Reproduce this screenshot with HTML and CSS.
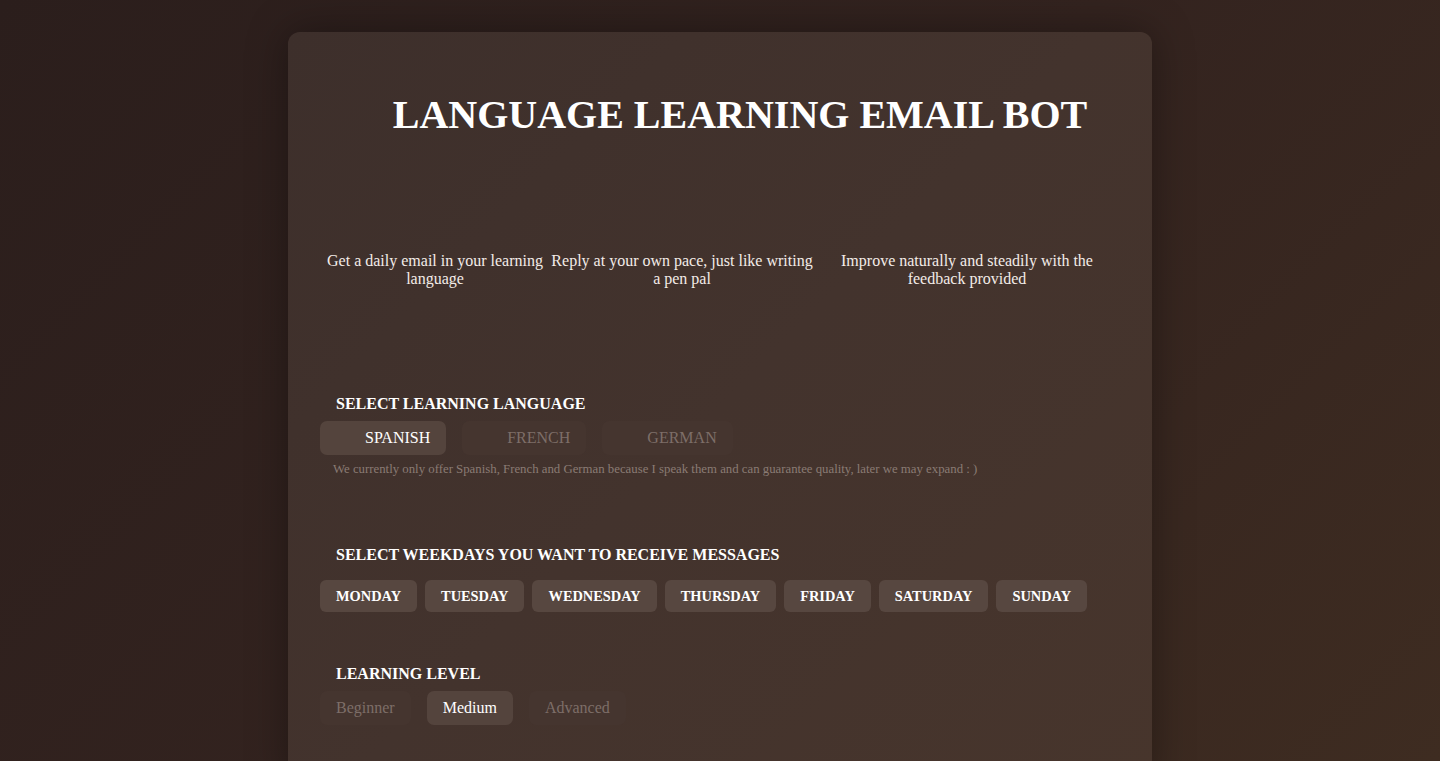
FILE: index.html
```html
<!DOCTYPE html>
<html lang="en">
<head>
<meta charset="utf-8">
<title>Language Learning Email Bot</title>
<link rel="stylesheet" href="styles.css">
</head>
<body>
<main class="card">
  <header class="title-row">
    <span class="logo-slot"></span>
    <h1 class="title">LANGUAGE LEARNING EMAIL BOT</h1>
  </header>

  <section class="features">
    <div class="feature"><p>Get a daily email in your learning language</p></div>
    <div class="feature"><p>Reply at your own pace, just like writing a pen pal</p></div>
    <div class="feature"><p>Improve naturally and steadily with the feedback provided</p></div>
  </section>

  <section class="group group-lang">
    <h2 class="label">SELECT LEARNING LANGUAGE</h2>
    <div class="options">
      <button class="opt lang active"><span class="flag-slot"></span>SPANISH</button>
      <button class="opt lang"><span class="flag-slot"></span>FRENCH</button>
      <button class="opt lang"><span class="flag-slot"></span>GERMAN</button>
    </div>
    <p class="note">We currently only offer Spanish, French and German because I speak them and can guarantee quality, later we may expand : )</p>
  </section>

  <section class="group group-days">
    <h2 class="label">SELECT WEEKDAYS YOU WANT TO RECEIVE MESSAGES</h2>
    <div class="days">
      <button class="day">MONDAY</button>
      <button class="day">TUESDAY</button>
      <button class="day">WEDNESDAY</button>
      <button class="day">THURSDAY</button>
      <button class="day">FRIDAY</button>
      <button class="day">SATURDAY</button>
      <button class="day">SUNDAY</button>
    </div>
  </section>

  <section class="group group-level">
    <h2 class="label">LEARNING LEVEL</h2>
    <div class="options">
      <button class="opt">Beginner</button>
      <button class="opt active">Medium</button>
      <button class="opt">Advanced</button>
    </div>
  </section>
</main>
</body>
</html>
```

FILE: styles.css
```css
* { box-sizing: border-box; }

html, body {
  margin: 0;
  padding: 0;
}

body {
  min-height: 100vh;
  background: linear-gradient(135deg, #2b1e1c 0%, #33231f 50%, #3e2c21 100%);
  background-attachment: fixed;
  font-family: "Liberation Serif", "Times New Roman", serif;
  color: #ffffff;
  padding-top: 32px;
}

.card {
  width: 864px;
  margin: 0 auto;
  padding: 32px 32px 60px;
  border-radius: 12px;
  background: linear-gradient(135deg, #3d2f2b 0%, #43332d 50%, #47352c 100%);
  box-shadow: 0 0 40px rgba(0, 0, 0, 0.35);
}

.title-row {
  display: flex;
  justify-content: center;
  align-items: center;
  margin-top: 28px;
}

.logo-slot {
  width: 40px;
  height: 40px;
  flex: none;
}

.title {
  margin: 0;
  font-size: 40px;
  font-weight: bold;
  line-height: 46px;
  color: #ffffff;
}

.features {
  display: grid;
  grid-template-columns: 230px 264px 306px;
  margin-top: 114px;
}

.feature p {
  margin: 0;
  text-align: center;
  font-size: 16px;
  line-height: 18px;
  color: #f3ece8;
}

.group-lang { margin-top: 107px; }
.group-days { margin-top: 69px; }
.group-level { margin-top: 53px; }

.label {
  margin: 0 0 0 16px;
  font-size: 16px;
  font-weight: bold;
  line-height: 18px;
  color: #ffffff;
}

.options {
  display: flex;
  gap: 16px;
  margin-top: 8px;
}

.opt {
  border: none;
  border-radius: 7px;
  padding: 8px 16px;
  font-family: inherit;
  font-size: 16px;
  line-height: 18px;
  background: #45352f;
  color: #7d6e68;
  display: flex;
  align-items: center;
}

.opt.active {
  background: #54443d;
  color: #ffffff;
}

.flag-slot {
  display: inline-block;
  width: 29px;
  height: 18px;
}

.note {
  margin: 7px 0 0 13px;
  font-size: 12.8px;
  line-height: 15px;
  color: #8a7b74;
}

.days {
  display: flex;
  gap: 8px;
  margin-top: 16px;
}

.day {
  border: none;
  border-radius: 6px;
  padding: 8px 16px;
  font-family: inherit;
  font-size: 14.4px;
  font-weight: bold;
  line-height: 16px;
  background: #574740;
  color: #ffffff;
}
```
